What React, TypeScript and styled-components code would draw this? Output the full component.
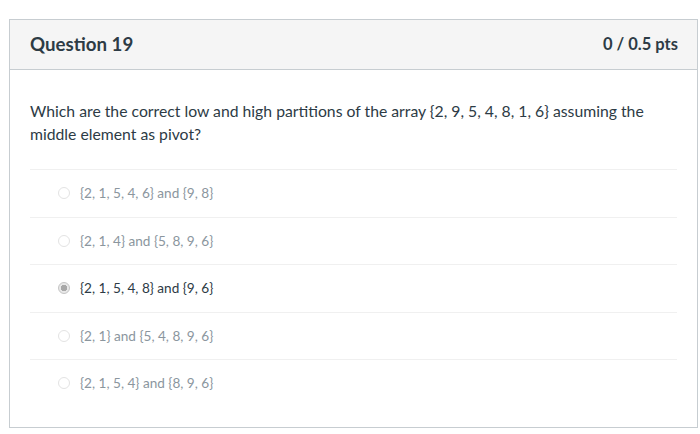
import React from 'react';
import styled, { createGlobalStyle } from 'styled-components';

const GlobalStyle = createGlobalStyle`
  html, body {
    margin: 0;
    padding: 0;
    background: #ffffff;
  }
  body {
    font-family: Lato, 'Liberation Sans', sans-serif;
    color: #2d3b45;
  }
`;

const QUESTION =
  'Which are the correct low and high partitions of the array {2, 9, 5, 4, 8, 1, 6} assuming the middle element as pivot?';

const ANSWERS = [
  { text: '{2, 1, 5, 4, 6} and {9, 8}', selected: false },
  { text: '{2, 1, 4} and {5, 8, 9, 6}', selected: false },
  { text: '{2, 1, 5, 4, 8} and {9, 6}', selected: true },
  { text: '{2, 1} and {5, 4, 8, 9, 6}', selected: false },
  { text: '{2, 1, 5, 4} and {8, 9, 6}', selected: false },
];

export default function App() {
  return (
    <>
      <GlobalStyle />
      <Page>
        <Card>
          <Header>
            <Title>Question 19</Title>
            <Points>0 / 0.5 pts</Points>
          </Header>
          <Body>
            <QuestionText>{QUESTION}</QuestionText>
            <AnswerList>
              {ANSWERS.map((a) => (
                <Answer key={a.text}>
                  <Radio selected={a.selected} />
                  <AnswerText selected={a.selected}>{a.text}</AnswerText>
                </Answer>
              ))}
            </AnswerList>
          </Body>
        </Card>
      </Page>
    </>
  );
}

const Page = styled.div`
  padding: 19px 3px 0 9px;
`;

const Card = styled.div`
  width: 689px;
  height: 409px;
  box-sizing: border-box;
  border: 1px solid #c7cdd1;
  background: #ffffff;
`;

const Header = styled.div`
  display: flex;
  align-items: center;
  justify-content: space-between;
  height: 50px;
  box-sizing: border-box;
  padding: 0 19px 2px 20px;
  background: #f5f5f5;
  border-bottom: 1px solid #c7cdd1;
`;

const Title = styled.h2`
  margin: 0;
  font-size: 18.7px;
  font-weight: 700;
  color: #2d3b45;
`;

const Points = styled.div`
  font-size: 16.5px;
  font-weight: 700;
  color: #2d3b45;
`;

const Body = styled.div`
  padding: 29px 20px 0 20px;
`;

const QuestionText = styled.p`
  margin: 0;
  max-width: 630px;
  font-size: 15.75px;
  line-height: 23px;
  color: #2d3b45;
`;

const AnswerList = styled.div`
  margin-top: 24px;
`;

const Answer = styled.div`
  display: flex;
  align-items: center;
  height: 47.5px;
  box-sizing: border-box;
  padding-left: 28px;
  border-top: 1px solid #f0f0f0;
`;

const Radio = styled.span<{ selected: boolean }>`
  width: 12px;
  height: 12px;
  border-radius: 50%;
  box-sizing: border-box;
  border: 1px solid ${(p) => (p.selected ? '#c4c4c4' : '#e3e3e3')};
  background: ${(p) => (p.selected ? 'radial-gradient(circle, #a8a8a8 0 3px, #e8e8e8 3.5px)' : '#ffffff')};
  margin-right: 10px;
`;

const AnswerText = styled.span<{ selected: boolean }>`
  font-size: 13.6px;
  color: ${(p) => (p.selected ? '#2d3b45' : '#8b969e')};
`;
